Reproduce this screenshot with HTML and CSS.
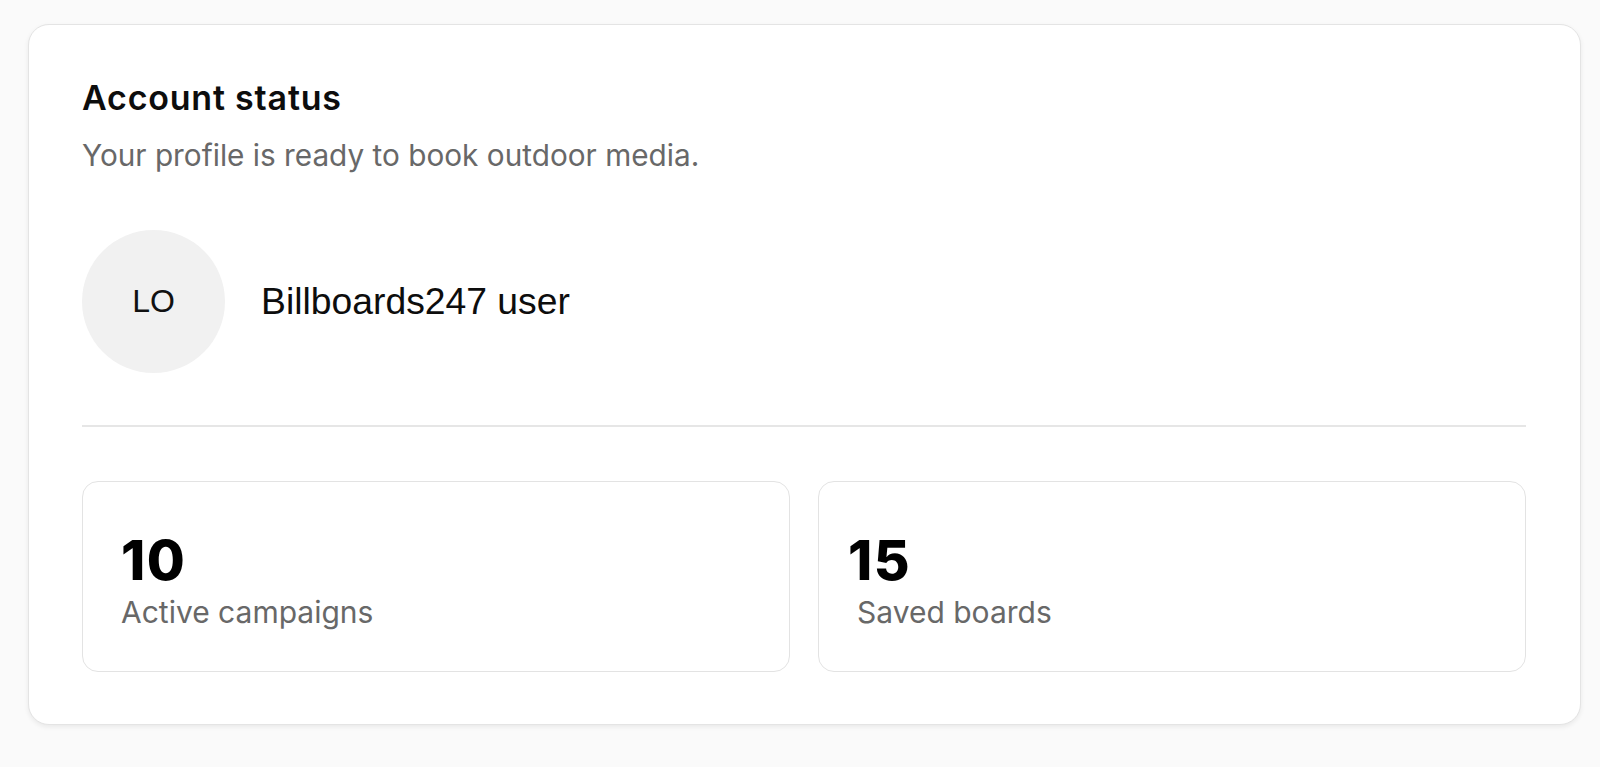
FILE: index.html
```html
<!DOCTYPE html>
<html lang="en">
<head>
  <meta charset="UTF-8" />
  <meta name="viewport" content="width=device-width, initial-scale=1.0"/>
  <title>Account status</title>
  <link rel="stylesheet" href="styles.css">
</head>
<body>

<div class="page">
  <section class="card">
    <h2 class="card-title">Account status</h2>
    <p class="card-sub">Your profile is ready to book outdoor media.</p>

    <div class="profile">
      <div class="avatar">LO</div>
      <div class="profile-name">Billboards247 user</div>
    </div>

    <hr class="divider" />

    <div class="stats">
      <div class="stat">
        <div class="stat-value">10</div>
        <div class="stat-label">Active campaigns</div>
      </div>
      <div class="stat">
        <div class="stat-value nudge">15</div>
        <div class="stat-label">Saved boards</div>
      </div>
    </div>
  </section>
</div>

</body>
</html>
```

FILE: styles.css
```css
* {
  margin: 0;
  padding: 0;
  box-sizing: border-box;
}

body {
  background: #fafafa;
  font-family: 'Inter', 'Noto Sans', sans-serif;
  color: #111;
}

.page {
  padding: 24px 19px 40px 28px;
}

.card {
  display: flex;
  flex-direction: column;
  background: #fff;
  border: 1px solid #e4e4e4;
  border-radius: 21px;
  box-shadow: 0 2px 5px rgba(0,0,0,0.07);
  padding: 53px 54px 52px 53px;
}

.card-title {
  font-size: 34px;
  line-height: 40px;
  font-weight: 600;
  letter-spacing: 0.8px;
  color: #0d0d0d;
}

.card-sub {
  margin-top: 17px;
  font-size: 29.75px;
  line-height: 40px;
  color: #686868;
}

.profile {
  display: flex;
  align-items: center;
  gap: 36px;
  margin-top: 55px;
}

.avatar {
  width: 143px;
  height: 143px;
  border-radius: 50%;
  background: #f1f1f1;
  display: flex;
  align-items: center;
  justify-content: center;
  font-family: 'Liberation Sans', Arial, sans-serif;
  font-size: 32px;
  color: #111;
}

.profile-name {
  font-family: 'Liberation Sans', Arial, sans-serif;
  font-size: 37.3px;
  color: #0d0d0d;
}

.divider {
  border: none;
  height: 2px;
  background: #e6e6e6;
  margin-top: 52px;
}

.stats {
  display: grid;
  grid-template-columns: 1fr 1fr;
  gap: 28px;
  margin-top: 54px;
}

.stat {
  border: 1.5px solid #e3e3e3;
  border-radius: 16px;
  padding: 46px 38px 41px 38px;
}

.stat-value {
  font-size: 55px;
  line-height: 64px;
  font-weight: 800;
  letter-spacing: 1.5px;
  color: #000;
}

.stat-value.nudge {
  margin-left: -9px;
}

.stat-label {
  margin-top: 2px;
  font-size: 30px;
  line-height: 36px;
  color: #686868;
}
```
